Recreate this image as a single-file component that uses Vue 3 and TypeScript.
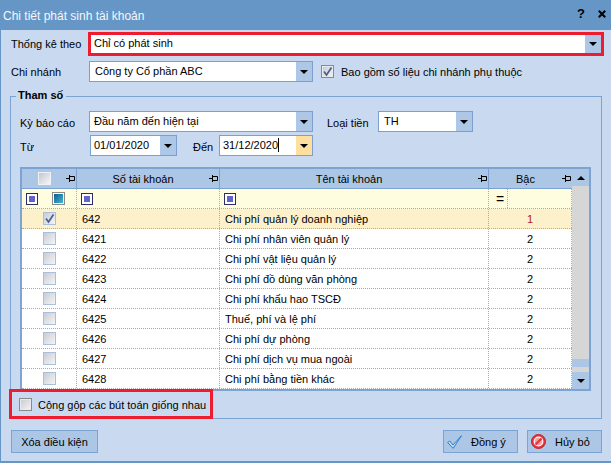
<script setup lang="ts">
const rows = [
  { code: '642', name: 'Chi phí quản lý doanh nghiệp', level: 1, on: true },
  { code: '6421', name: 'Chi phí nhân viên quản lý', level: 2, on: false },
  { code: '6422', name: 'Chi phí vật liệu quản lý', level: 2, on: false },
  { code: '6423', name: 'Chi phí đồ dùng văn phòng', level: 2, on: false },
  { code: '6424', name: 'Chi phí khấu hao TSCĐ', level: 2, on: false },
  { code: '6425', name: 'Thuế, phí và lệ phí', level: 2, on: false },
  { code: '6426', name: 'Chi phí dự phòng', level: 2, on: false },
  { code: '6427', name: 'Chi phí dịch vụ mua ngoài', level: 2, on: false },
  { code: '6428', name: 'Chi phí bằng tiền khác', level: 2, on: false },
]
</script>

<template>
  <div class="win">
    <header class="title">
      <span class="title-text">Chi tiết phát sinh tài khoản</span>
      <span class="title-btns">
        <b class="help">?</b>
        <svg viewBox="0 0 8 8" width="8" height="8"><path d="M.8 .8 L7.200 7.200 M7.200 .8 L.8 7.200" stroke="#000" stroke-width="2" fill="none" /></svg>
      </span>
    </header>
    <main class="body">
      <div class="row first">
        <label class="lab w78">Thống kê theo</label>
        <div class="combo red grow">
          <span class="val">Chỉ có phát sinh</span>
          <span class="drop"><i class="tri"></i></span>
        </div>
      </div>
      <div class="row second">
        <label class="lab w79">Chi nhánh</label>
        <div class="combo w224">
          <span class="val">Công ty Cổ phần ABC</span>
          <span class="drop"><i class="tri"></i></span>
        </div>
        <span class="chk big checked m8">
          <svg viewBox="0 0 11 11" width="11" height="11"><path d="M2 5.5 L4.5 9 L9.5 1.5" fill="none" stroke="#4a5f94" stroke-width="1.7" /></svg>
        </span>
        <span class="txt ml7">Bao gồm số liệu chi nhánh phụ thuộc</span>
      </div>

      <section class="group">
        <span class="legend">Tham số</span>
        <div class="row param">
          <label class="lab w69 low">Kỳ báo cáo</label>
          <div class="combo w224">
            <span class="val v1">Đầu năm đến hiện tại</span>
            <span class="drop"><i class="tri"></i></span>
          </div>
          <label class="lab cur low">Loại tiền</label>
          <div class="combo w95">
            <span class="val">TH</span>
            <span class="drop"><i class="tri"></i></span>
          </div>
        </div>
        <div class="row param2">
          <label class="lab w70 low">Từ</label>
          <div class="combo w87">
            <span class="val v3">01/01/2020</span>
            <span class="drop"><i class="tri"></i></span>
          </div>
          <label class="lab den low">Đến</label>
          <div class="combo w94">
            <span class="val v3">31/12/2020<i class="caret"></i></span>
            <span class="drop hot"><i class="tri"></i></span>
          </div>
        </div>

        <div class="grid">
          <div class="table">
            <div class="tr head">
              <div class="c c1 center">
                <span class="chk hd"></span>
                <svg class="pin" viewBox="0 0 9 7" width="9" height="7"><path d="M0 3.5H3.500M3.500 0V7M3.500 1.500H8.500V5.500H3.500" fill="none" stroke="#000" /></svg>
              </div>
              <div class="c c2 center">Số tài khoản
                <svg class="pin" viewBox="0 0 9 7" width="9" height="7"><path d="M0 3.5H3.500M3.500 0V7M3.500 1.500H8.500V5.500H3.500" fill="none" stroke="#000" /></svg>
              </div>
              <div class="c c3 center">Tên tài khoản
                <svg class="pin" viewBox="0 0 9 7" width="9" height="7"><path d="M0 3.5H3.500M3.500 0V7M3.500 1.500H8.500V5.500H3.500" fill="none" stroke="#000" /></svg>
              </div>
              <div class="c c4 center">Bậc
                <svg class="pin" viewBox="0 0 9 7" width="9" height="7"><path d="M0 3.5H3.500M3.500 0V7M3.500 1.500H8.500V5.500H3.500" fill="none" stroke="#000" /></svg>
              </div>
            </div>
            <div class="tr filter">
              <div class="c c1 fc">
                <span class="fop"><i></i></span>
                <span class="fsq"><i></i></span>
              </div>
              <div class="c c2 fc"><span class="fop"><i></i></span></div>
              <div class="c c3 fc"><span class="fop"><i></i></span></div>
              <div class="c c4 fc"><span class="eq">=</span><span class="fdiv"></span></div>
            </div>
            <div v-for="r in rows" :key="r.code" class="tr data" :class="{ sel: r.on }">
              <div class="c c1 center ck">
                <span class="chk cell" :class="{ checked: r.on }">
                  <svg v-if="r.on" viewBox="0 0 11 11" width="11" height="11"><path d="M2 5.500 L4.500 9 L9.500 1.500" fill="none" stroke="#4a5f94" stroke-width="1.7" /></svg>
                </span>
              </div>
              <div class="c c2 tl">{{ r.code }}</div>
              <div class="c c3 tl">{{ r.name }}</div>
              <div class="c c4 center" :class="{ redt: r.on }">{{ r.level }}</div>
            </div>
          </div>
          <div class="scroll">
            <span class="sbtn"><i class="tri up"></i></span>
            <span class="track"><span class="thumb"></span></span>
            <span class="sbtn"><i class="tri"></i></span>
          </div>
        </div>

        <div class="row gop">
          <span class="chk big"></span>
          <span class="txt ml6">Cộng gộp các bút toán giống nhau</span>
        </div>
        <div class="redbox"></div>
      </section>

      <footer class="foot">
        <button class="btn clear">Xóa điều kiện</button>
        <span class="spacer"></span>
        <button class="btn act">
          <svg viewBox="0 0 15 14" width="15" height="14"><path d="M.6 7.500 L2.800 6 L6 10 L14.500 .6 L6.200 13.400 Z" fill="#bcdcf6" stroke="#2f7fd0" stroke-width="1" stroke-linejoin="round" /></svg>
          <span>Đồng ý</span>
        </button>
        <button class="btn act">
          <svg viewBox="0 0 15 15" width="15" height="15"><circle cx="7.500" cy="7.500" r="7" fill="#e4343a" stroke="#c0252b" /><circle cx="7.500" cy="7.500" r="4.300" fill="#f3a0a0" stroke="#fff" stroke-width="1.200" /><path d="M4.500 10.500 L10.500 4.500" stroke="#e4343a" stroke-width="2.200" /></svg>
          <span>Hủy bỏ</span>
        </button>
      </footer>
    </main>
  </div>
</template>

<style>
html, body { margin: 0; padding: 0; background: #c9daf0; }
</style>

<style scoped>
.win {
  width: 611px; height: 463px; box-sizing: border-box; overflow: hidden;
  display: flex; flex-direction: column; background: #c9daf0;
  font: 11px "Liberation Sans", Tahoma, sans-serif; color: #000;
  border-left: 1px solid #6596c6; border-bottom: 2px solid #6596c6;
}
.title {
  height: 30px; margin-left: -1px; flex: none; background: #6596c6; color: #fff;
  display: flex; align-items: center; justify-content: space-between;
  font-size: 12px; padding: 2px 0 0 3px; box-sizing: border-box;
}
.title-text { opacity: .93; }
.title-btns { display: flex; align-items: center; gap: 13px; color: #000; padding-right: 5px; margin-top: -5px; }
.help { font: bold 13px "Liberation Sans", sans-serif; }
.body { flex: 1; padding: 2px 9px 0 9px; display: flex; flex-direction: column; }
.row { display: flex; align-items: center; }
.first { height: 24px; }
.second { height: 21px; margin-top: 5px; }
.lab { flex: none; white-space: nowrap; }
.low { padding-top: 2px; box-sizing: border-box; }
.w78 { width: 78px; padding-left: 1px; box-sizing: border-box; }
.w79 { width: 79px; padding-left: 1px; box-sizing: border-box; }
.w69 { width: 69px; }
.w70 { width: 70px; }
.cur { width: 51px; margin-left: 14px; }
.den { width: 26px; margin-left: 16px; }
.combo {
  display: flex; height: 100%; box-sizing: border-box; background: #fff;
  border: 1px solid #7b9fd0; flex: none;
}
.grow { flex: 1; }
.red { border: 3px solid #ed1c2e; margin-right: -2px; }
.w224 { width: 224px; }
.w95 { width: 95px; }
.w87 { width: 87px; }
.w94 { width: 94px; }
.val { flex: 1; padding-left: 5px; line-height: 19px; white-space: nowrap; overflow: hidden; }
.red .val { padding-left: 3px; line-height: 17px; }
.v1 { padding-left: 4px; }
.v3 { padding-left: 3px; }
.drop { width: 16px; background: #adc7e6; display: flex; align-items: center; justify-content: center; flex: none; }
.hot { background: #fde0a0; }
.tri { width: 0; height: 0; border-left: 4px solid transparent; border-right: 4px solid transparent; border-top: 4px solid #000; display: block; }
.tri.up { border-top: 0; border-bottom: 4px solid #000; }
.caret { display: inline-block; width: 1px; height: 14px; background: #000; vertical-align: -3px; }
.chk {
  display: inline-flex; align-items: center; justify-content: center; box-sizing: border-box; flex: none;
  background: linear-gradient(135deg, #c6c9cf, #f4f5f7);
}
.big { width: 13px; height: 13px; border: 1px solid #8a8a8a; box-shadow: inset 0 0 0 1px #e9e9ee; }
.m8 { margin-left: 8px; }
.ml7 { margin-left: 7px; }
.ml6 { margin-left: 6px; }
.txt { white-space: nowrap; }
.group {
  position: relative; margin-top: 14px; height: 323px; box-sizing: border-box;
  border: 1px solid #7ba3d3; padding: 14px 0 0 9px;
}
.legend {
  position: absolute; left: 5px; top: -9px; padding: 0 3px 0 2px; background: #c9daf0; font-weight: bold; line-height: 15px;
}
.param { height: 21px; }
.param2 { height: 21px; margin-top: 3px; }
.grid {
  margin-top: 11px; width: 571px; height: 224px; box-sizing: border-box; display: flex;
  border: 2px solid #7da3d3; background: #fff;
}
.table { width: 550px; flex: none; display: flex; flex-direction: column; }
.tr { display: flex; flex: none; }
.c { box-sizing: border-box; height: 100%; position: relative; flex: none; white-space: nowrap; }
.c1 { width: 55px; }
.c2 { width: 143px; }
.c3 { width: 269px; }
.c4 { width: 83px; }
.center { display: flex; align-items: center; justify-content: center; }
.tl { display: flex; align-items: center; padding-left: 5px; }
.head { height: 20px; background: #acc6e5; border-bottom: 1px solid #7da3d3; box-sizing: border-box; }
.head .c { border-right: 1px solid #7da3d3; padding: 0 10px 0 0; }
.head .c4 { border-right: 0; }
.pin { position: absolute; right: 1px; top: 6px; }
.chk.hd { width: 13px; height: 13px; border: 1px solid #eef1f6; background: linear-gradient(135deg, #c4c7cd, #f5f6f8); }
.filter { height: 20px; background: #fffde0; border-bottom: 1px dotted #aaa; box-sizing: border-box; }
.filter .c { border-right: 1px dotted #aaa; }
.fc { display: flex; align-items: center; padding-left: 4px; gap: 14px; }
.fop { width: 12px; height: 12px; box-sizing: border-box; border: 1px solid #2d2d63; background: #fff; display: flex; align-items: center; justify-content: center; }
.fop i { width: 6px; height: 6px; background: #6363cf; display: block; }
.fsq { width: 13px; height: 13px; box-sizing: border-box; border: 1px solid #8a8a8a; background: #fff; padding: 1px; display: flex; }
.fsq i { flex: 1; background: linear-gradient(135deg, #0f5e8e, #3fb8d8); display: block; }
.eq { font-size: 14px; width: 14px; text-align: center; }
.fdiv { position: absolute; left: 18px; top: 0; bottom: 0; border-left: 1px dotted #aaa; }
.data { height: 20px; background: #fff; border-bottom: 1px dotted #aaa; box-sizing: border-box; }
.data .c { border-right: 1px dotted #aaa; }
.sel { background: #fdf1cb; }
.redt { color: #b01818; }
.chk.cell { width: 13px; height: 13px; border: 1px solid #a9bfdc; background: linear-gradient(135deg, #c8ccd3, #f4f5f7); }
.scroll { flex: 1; display: flex; flex-direction: column; background: #d6d6d6; }
.sbtn { height: 17px; background: #acc6e5; display: flex; align-items: center; justify-content: center; flex: none; }
.track { flex: 1; background: #d6d6d6; display: flex; }
.thumb { flex: 1; background: #acc6e5; margin: 173px 0 5px; }
.gop { height: 27px; margin-left: -1px; }
.redbox {
  position: absolute; left: -2px; top: 292px; width: 204px; height: 30px; box-sizing: border-box;
  border: 3px solid #ed1c2e; pointer-events: none;
}
.foot { display: flex; margin-top: 11px; height: 23px; padding-left: 1px; gap: 9px; }
.spacer { flex: 1; }
.btn {
  font: inherit; color: #000; background: #acc6e5; border: 1px solid #7ba3d3; height: 23px; padding: 0;
  display: flex; align-items: center; box-sizing: border-box;
}
.clear { width: 87px; justify-content: center; }
.act { width: 75px; padding-left: 3px; gap: 9px; }
</style>
